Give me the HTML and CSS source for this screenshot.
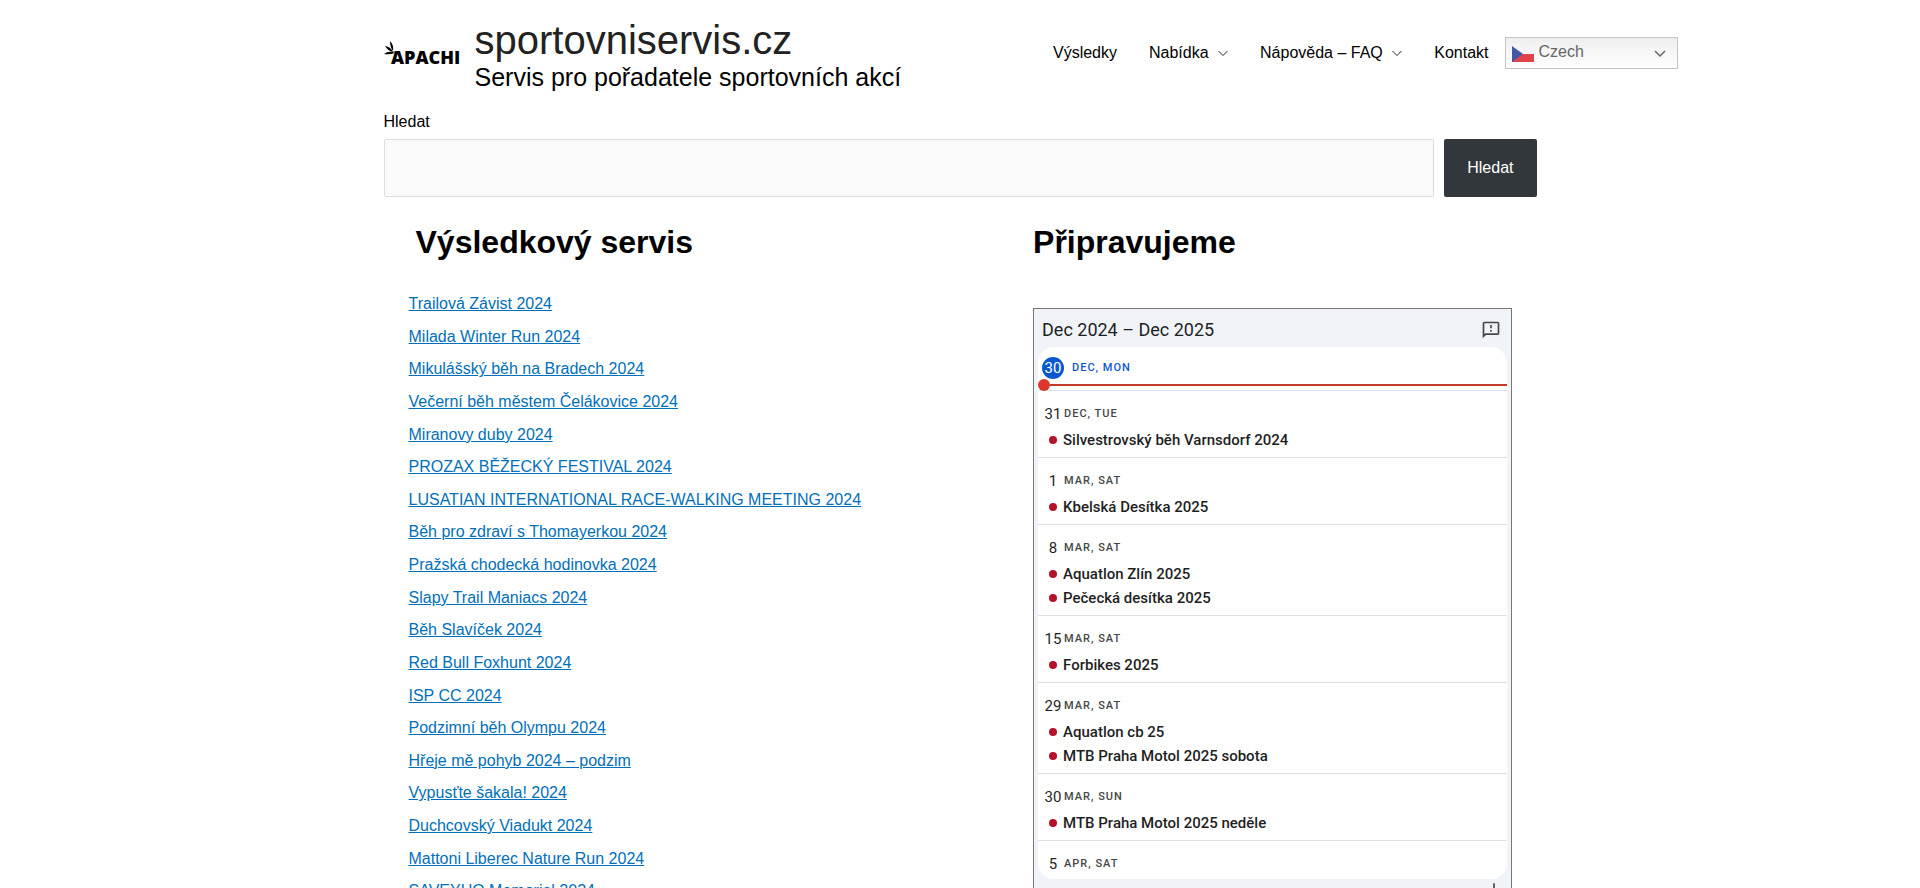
FILE: index.html
```html
<!DOCTYPE html>
<html lang="cs">
<head>
<meta charset="utf-8">
<meta name="viewport" content="width=device-width, initial-scale=1">
<title>sportovniservis.cz</title>
<link rel="stylesheet" href="styles.css">
</head>
<body>
<header class="site-header container">
  <a class="brand" href="#">
    <svg class="logo" viewBox="0 0 76 24" role="img" aria-label="Apachi">
      <path d="M6 0Q10 4 9 10Q6 6 6 0ZM1 5Q7 6 9 11Q4 10 1 5ZM0 13Q5 9 11 12Q5 14 0 13Z"/>
      <path fill="#777" d="M9 10l6 1v2l-6-1z"/>
      <text class="logo-text" x="7" y="23">APACHI</text>
    </svg>
    <span class="brand-text">
      <span class="site-title">sportovniservis.cz</span>
      <span class="tagline">Servis pro pořadatele sportovních akcí</span>
    </span>
  </a>
  <nav class="main-nav">
    <a href="#">Výsledky</a>
    <a href="#">Nabídka <svg class="chevron" viewBox="0 0 10 10"><path d="M.5 3L5 7.500 9.500 3"/></svg></a>
    <a href="#">Nápověda – FAQ <svg class="chevron" viewBox="0 0 10 10"><path d="M.5 3L5 7.500 9.500 3"/></svg></a>
    <a href="#">Kontakt</a>
    <span class="language">
      <select class="language-select" aria-label="Jazyk"><option>Czech</option></select>
      <svg class="flag" viewBox="0 0 24 24"><path fill="#f4f4f6" d="M1 4h22v8H1z"/><path fill="#e0434a" d="M1 12h22v8H1z"/><path fill="#4257a5" d="M1 4l11 8-11 8z"/></svg>
      <svg class="language-arrow" viewBox="0 0 12 12"><path d="M1 4l5 5 5-5"/></svg>
    </span>
  </nav>
</header>
<main class="container">
  <form class="search">
    <label for="q">Hledat</label>
    <div class="search-row">
      <input id="q" type="search">
      <button type="button">Hledat</button>
    </div>
  </form>
  <div class="columns">
    <section class="results">
      <h2>Výsledkový servis</h2>
      <ul>
        <li><a href="#">Trailová Závist 2024</a></li>
        <li><a href="#">Milada Winter Run 2024</a></li>
        <li><a href="#">Mikulášský běh na Bradech 2024</a></li>
        <li><a href="#">Večerní běh městem Čelákovice 2024</a></li>
        <li><a href="#">Miranovy duby 2024</a></li>
        <li><a href="#">PROZAX BĚŽECKÝ FESTIVAL 2024</a></li>
        <li><a href="#">LUSATIAN INTERNATIONAL RACE-WALKING MEETING 2024</a></li>
        <li><a href="#">Běh pro zdraví s Thomayerkou 2024</a></li>
        <li><a href="#">Pražská chodecká hodinovka 2024</a></li>
        <li><a href="#">Slapy Trail Maniacs 2024</a></li>
        <li><a href="#">Běh Slavíček 2024</a></li>
        <li><a href="#">Red Bull Foxhunt 2024</a></li>
        <li><a href="#">ISP CC 2024</a></li>
        <li><a href="#">Podzimní běh Olympu 2024</a></li>
        <li><a href="#">Hřeje mě pohyb 2024 – podzim</a></li>
        <li><a href="#">Vypusťte šakala! 2024</a></li>
        <li><a href="#">Duchcovský Viadukt 2024</a></li>
        <li><a href="#">Mattoni Liberec Nature Run 2024</a></li>
        <li><a href="#">SAVEYUO Memorial 2024</a></li>
      </ul>
    </section>
    <section class="upcoming">
      <h2>Připravujeme</h2>
      <div class="calendar">
        <div class="calendar-head">
          <span>Dec 2024 – Dec 2025</span>
          <button type="button" class="feedback" aria-label="Feedback"><svg viewBox="0 0 24 24"><path d="M20 2H4c-1.100 0-2 .9-2 2v18l4-4h14c1.100 0 2-.9 2-2V4c0-1.100-.9-2-2-2zm0 14H5.200L4 17.200V4h16v12zM11 12h2v2h-2zm0-6h2v4h-2z"/></svg></button>
        </div>
        <div class="agenda">
          <div class="day today"><div class="date"><b>30</b><span>DEC, MON</span></div><div class="now"></div></div>
          <div class="day"><div class="date"><b>31</b><span>DEC, TUE</span></div><div class="event">Silvestrovský běh Varnsdorf 2024</div></div>
          <div class="day"><div class="date"><b>1</b><span>MAR, SAT</span></div><div class="event">Kbelská Desítka 2025</div></div>
          <div class="day"><div class="date"><b>8</b><span>MAR, SAT</span></div><div class="event">Aquatlon Zlín 2025</div><div class="event">Pečecká desítka 2025</div></div>
          <div class="day"><div class="date"><b>15</b><span>MAR, SAT</span></div><div class="event">Forbikes 2025</div></div>
          <div class="day"><div class="date"><b>29</b><span>MAR, SAT</span></div><div class="event">Aquatlon cb 25</div><div class="event">MTB Praha Motol 2025 sobota</div></div>
          <div class="day"><div class="date"><b>30</b><span>MAR, SUN</span></div><div class="event">MTB Praha Motol 2025 neděle</div></div>
          <div class="day"><div class="date"><b>5</b><span>APR, SAT</span></div></div>
        </div>
        <div class="calendar-foot">
          <button type="button" class="add" aria-label="Add"><svg viewBox="0 0 24 24"><path d="M11 5h2v14h-2zM5 11h14v2H5z"/></svg></button>
        </div>
      </div>
    </section>
  </div>
</main>
</body>
</html>
```
FILE: styles.css
```css
* { box-sizing: border-box; }
body {
  margin: 0;
  background: #fff;
  color: #000;
  font: 16px/26px "Liberation Sans", Arial, sans-serif;
}
.container { max-width: 1153px; margin: 0 auto; }
h2 { margin: 0; font-size: 32px; line-height: 42px; }

.site-header {
  display: flex;
  align-items: center;
  justify-content: space-between;
  padding-top: 16px;
}
.brand { display: flex; align-items: center; gap: 15px; color: #000; text-decoration: none; }
.logo { width: 76px; height: 24px; overflow: visible; }
.logo-text { font: 800 18px "Open Sans", sans-serif; }
.brand-text { display: flex; flex-direction: column; white-space: nowrap; }
.site-title { font-size: 40px; line-height: 48px; color: #222; }
.tagline { font-size: 25px; line-height: 26px; }
.main-nav { display: flex; align-items: center; margin-right: -141px; white-space: nowrap; }
.main-nav a { padding: 0 16px; color: #000; text-decoration: none; }
.chevron { width: 10px; height: 10px; margin-left: 5px; }
.chevron path, .language-arrow path { fill: none; stroke: #222; stroke-width: 1; }
.language { position: relative; }
.language-select {
  display: block;
  appearance: none;
  width: 173px;
  height: 32px;
  padding: 0 32px 2px 33px;
  border: 1px solid #c4c4c4;
  border-radius: 0;
  background: linear-gradient(#eee, #fff);
  color: #666;
  font: inherit;
}
.flag, .language-arrow { position: absolute; pointer-events: none; }
.flag { left: 6px; top: 5px; width: 24px; height: 24px; }
.language-arrow { right: 12px; top: 10px; width: 12px; height: 12px; }
.language-arrow path { stroke: #666; stroke-width: 1.5; }

.search { padding-top: 19px; }
.search label { display: block; margin-bottom: 4px; }
.search-row { display: flex; gap: 10px; }
.search input {
  flex: 1;
  min-width: 0;
  height: 58px;
  padding: 0 16px;
  border: 1px solid #ddd;
  border-radius: 2px;
  background: #fafafa;
  font: inherit;
}
.search button {
  padding: 0 23px;
  border: 0;
  border-radius: 2px;
  background: #32373c;
  color: #fff;
  font: inherit;
}

.columns { display: grid; grid-template-columns: 13fr 11fr; padding-top: 24px; }
.results, .upcoming { padding: 0 25px; }
.results h2 { padding-left: 7px; }
.results ul { list-style: none; margin: 25px 0 0; padding: 0; line-height: 2.04; }
.results a { color: #0170b9; }

.calendar {
  display: flex;
  flex-direction: column;
  height: 612px;
  margin-top: 45px;
  padding: 0 4px;
  border: 1px solid #777;
  background: #f0f4f9;
  color: #1f1f1f;
  font-family: Roboto, sans-serif;
}
.calendar-head {
  display: flex;
  align-items: center;
  justify-content: space-between;
  height: 38px;
  padding: 4px 6px 0 4px;
  font-size: 18px;
}
.feedback, .add { display: flex; padding: 0; border: 0; background: none; }
.feedback svg, .add svg { width: 20px; height: 20px; fill: #444746; }
.agenda { flex: 1; overflow: hidden; border-radius: 16px; background: #fff; }
.day { padding: 8px 0 5px; border-bottom: 1px solid #dde3ea; }
.date { display: flex; align-items: center; height: 29px; padding-left: 4px; }
.date b { width: 22px; font-size: 15px; font-weight: 400; line-height: 22px; text-align: center; }
.date span { color: #444746; font-size: 11px; font-weight: 500; letter-spacing: 1px; }
.event { display: flex; align-items: center; gap: 6px; height: 24px; padding-left: 11px; font-size: 15px; font-weight: 500; }
.event::before { content: ""; width: 8px; height: 8px; border-radius: 50%; background: #b3122b; }
.today { padding: 6px 0 2px; }
.today .date { gap: 8px; }
.today b { border-radius: 50%; background: #0b57d0; color: #fff; }
.today .date span { color: #0b57d0; }
.now { display: flex; align-items: center; height: 6px; }
.now::before { content: ""; width: 12px; height: 12px; border-radius: 50%; background: #db372d; }
.now::after { content: ""; flex: 1; height: 2px; background: #c5392d; }
.calendar-foot { display: flex; justify-content: flex-end; height: 40px; padding-right: 3px; }

::-webkit-scrollbar { display: none; }
```
